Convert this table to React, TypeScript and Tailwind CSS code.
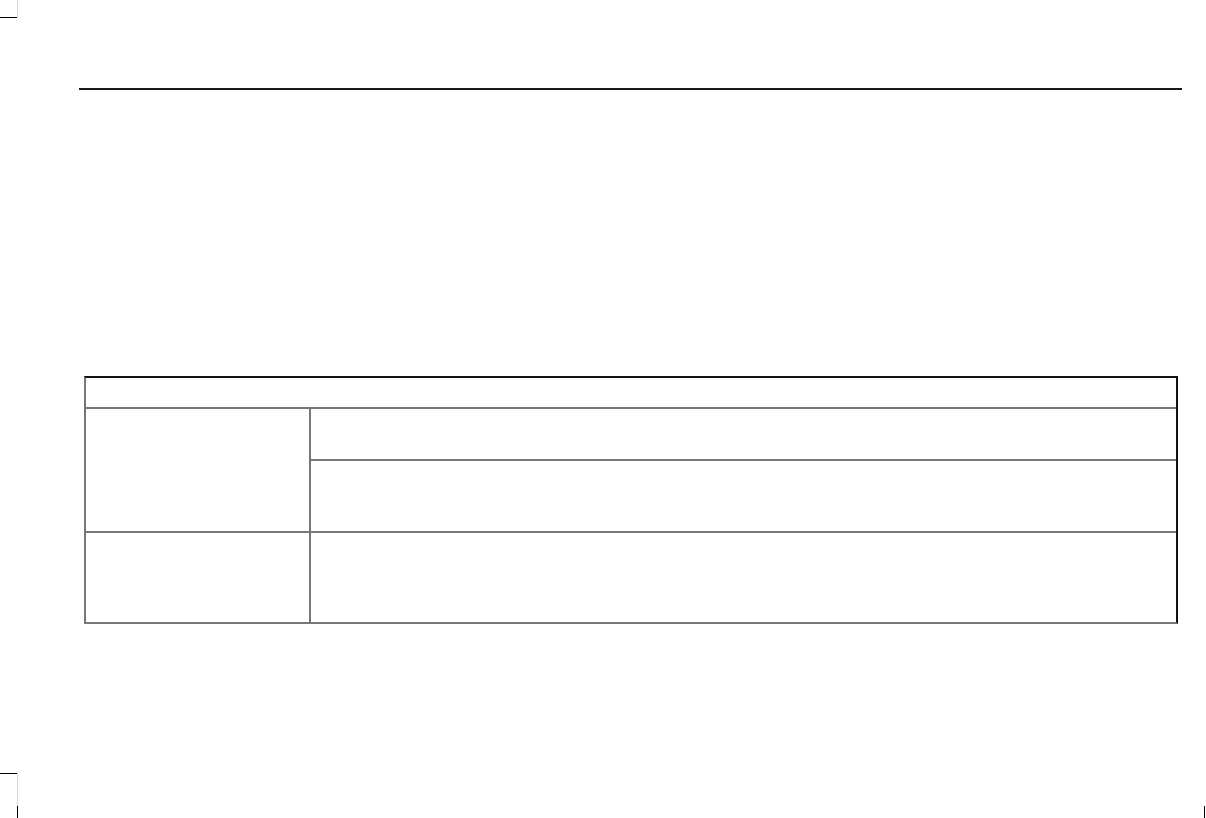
export default function App() {
  return (
    <div className="relative w-[1206px] h-[818px] overflow-hidden bg-white">
      {/* crop marks */}
      <div className="absolute left-0 top-[17px] w-[17px] h-px bg-black" />
      <div className="absolute left-[17px] top-0 w-px h-[17px] bg-[#d4d4d4]" />
      <div className="absolute left-0 top-[773px] w-[17px] h-px bg-black" />
      <div className="absolute left-[17px] top-[773px] w-px h-[33px] bg-[#d4d4d4]" />
      <div className="absolute left-[17px] top-[806px] w-px h-[12px] bg-black" />
      <div className="absolute left-[1204px] top-[806px] w-px h-[12px] bg-black" />

      {/* header rule */}
      <div className="pt-[88px] pl-[79px]">
        <div className="w-[1103px] h-[2px] bg-[#1a1a1a]" />
      </div>

      {/* table */}
      <div className="ml-[84px] mt-[286px] w-[1094px] border-t-[2px] border-t-[#111] border-l-2 border-l-[#777] border-r-2 border-r-[#111] border-b-2 border-b-[#777]">
        <div className="h-[31px] border-b-2 border-[#777]" />
        <div className="flex h-[124px] border-b-2 border-[#777]">
          <div className="w-[225px] border-r-2 border-[#777]" />
          <div className="flex-1 flex flex-col">
            <div className="h-[52px] border-b-2 border-[#777]" />
            <div className="flex-1" />
          </div>
        </div>
        <div className="flex h-[89px]">
          <div className="w-[225px] border-r-2 border-[#777]" />
          <div className="flex-1" />
        </div>
      </div>
    </div>
  );
}
